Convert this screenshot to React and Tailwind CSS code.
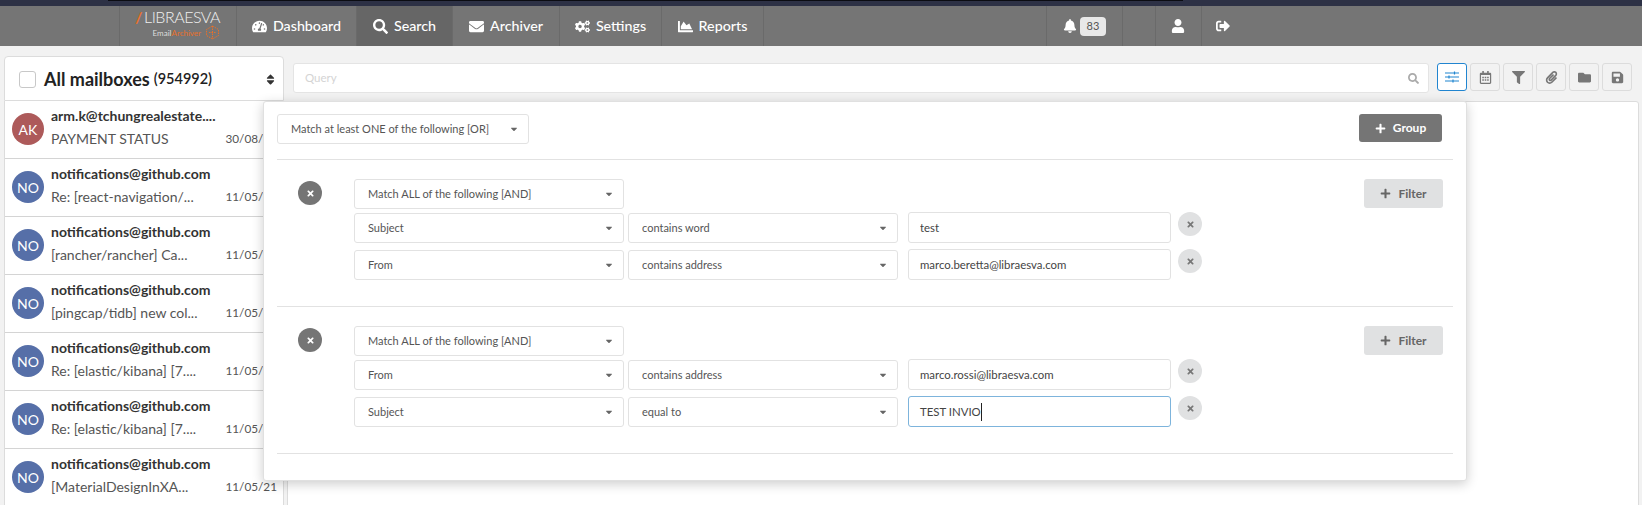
import React from 'react';
import {
  FaTachometerAlt, FaSearch, FaEnvelope, FaCogs, FaChartArea, FaBell, FaUser,
  FaSignOutAlt, FaTimes, FaPlus, FaFilter, FaPaperclip, FaFolder, FaSave, FaSort, FaCaretDown, FaRegCalendarAlt,
} from 'react-icons/fa';

const MESSAGES = [
  { initials: 'AK', from: 'arm.k@tchungrealestate....', subject: 'PAYMENT STATUS', date: '30/08/21', red: true },
  { initials: 'NO', from: 'notifications@github.com', subject: 'Re: [react-navigation/...', date: '11/05/21' },
  { initials: 'NO', from: 'notifications@github.com', subject: '[rancher/rancher] Ca...', date: '11/05/21' },
  { initials: 'NO', from: 'notifications@github.com', subject: '[pingcap/tidb] new col...', date: '11/05/21' },
  { initials: 'NO', from: 'notifications@github.com', subject: 'Re: [elastic/kibana] [7....', date: '11/05/21' },
  { initials: 'NO', from: 'notifications@github.com', subject: 'Re: [elastic/kibana] [7....', date: '11/05/21' },
  { initials: 'NO', from: 'notifications@github.com', subject: '[MaterialDesignInXA...', date: '11/05/21' },
];

const NAV_ITEMS = [
  { label: 'Dashboard', icon: FaTachometerAlt, width: 'w-[120px]' },
  { label: 'Search', icon: FaSearch, width: 'w-[96px]', active: true },
  { label: 'Archiver', icon: FaEnvelope, width: 'w-[107px]' },
  { label: 'Settings', icon: FaCogs, width: 'w-[102px]' },
  { label: 'Reports', icon: FaChartArea, width: 'w-[102px]' },
];

function Select({ label, className }) {
  return (
    <div className={`h-[30px] flex items-center justify-between pl-[13px] pr-[9px] bg-white border border-[#e2e2e2] rounded-[3px] text-[11px] text-[#555] whitespace-nowrap ${className}`}>
      <span>{label}</span>
      <FaCaretDown className="text-[#666] text-[10px]" />
    </div>
  );
}

function RemoveButton() {
  return (
    <button className="w-[24px] h-[24px] rounded-full bg-[#e0e1e2] text-[#777] flex items-center justify-center shrink-0 ml-[7px]">
      <FaTimes className="text-[9px]" />
    </button>
  );
}

function Condition({ field, op, value, focused }) {
  return (
    <div className="flex items-start">
      <Select label={field} className="w-[270px] mt-px" />
      <Select label={op} className="w-[270px] ml-[4px] mt-px" />
      {focused ? (
        <div className="w-[263px] h-[31px] ml-[10px] flex items-center px-[11px] bg-white border border-[#7db4dc] rounded-[3px] text-[11.4px] text-[#444]">
          <span className="border-r border-[#222] leading-[18px]">{value}</span>
        </div>
      ) : (
        <input
          readOnly
          value={value}
          className="w-[263px] h-[31px] ml-[10px] px-[11px] bg-white border border-[#e2e2e2] rounded-[3px] text-[11.4px] text-[#444] outline-none"
        />
      )}
      <RemoveButton />
    </div>
  );
}

function FilterGroup({ rows }) {
  return (
    <div className="flex items-start pl-[21px] pr-[10px] pt-[19px] pb-[26px] border-b border-[#e2e2e2]">
      <button className="w-[24px] h-[24px] rounded-full bg-[#757575] text-white flex items-center justify-center mt-[2px] mr-[32px] shrink-0">
        <FaTimes className="text-[9px]" />
      </button>
      <div className="flex flex-col gap-[6px]">
        <Select label="Match ALL of the following [AND]" className="w-[270px] -mb-[3px]" />
        {rows.map((row) => <Condition key={row.field} {...row} />)}
      </div>
      <button className="ml-auto w-[79px] h-[29px] rounded-[3px] bg-[#e0e1e2] text-[#666] text-[12px] font-bold flex items-center justify-center gap-[7px]">
        <FaPlus className="text-[11px]" /> Filter
      </button>
    </div>
  );
}

function ToolButton({ children, active }) {
  return (
    <button className={`w-[30px] h-[28px] rounded-[3px] flex items-center justify-center text-[13px] text-[#777] ${active ? 'border border-[#2185d0] bg-white' : 'border border-[#dcdcdc] bg-[#f2f2f2]'}`}>
      {children}
    </button>
  );
}

export default function App() {
  return (
    <div className="h-[505px] overflow-hidden bg-[#f2f2f2] font-['Lato','Open_Sans',sans-serif]">
      {/* Window strip above the nav */}
      <div className="h-[6px] bg-[#2d3145]">
        <div className="h-px ml-[108px] w-[1075px] bg-[#0b0c12]" />
      </div>

      {/* Nav */}
      <div className="h-[40px] bg-[#757575] flex text-white text-[14.25px]">
        <div className="w-[119px]" />
        <div className="w-[118px] border-x border-[#6a6a6a] flex flex-col items-end pr-[16px] pt-[3px]">
          <div className="text-[16px] font-light leading-[16px] text-[#f0f0f0] tracking-[-0.5px] whitespace-nowrap">
            <span className="text-[#e8702a] font-bold mr-[2px]">/</span>LIBRAESVA
          </div>
          <div className="flex items-center text-[8px] leading-[14px]">
            <span className="text-[#ddd]">Email</span>
            <span className="text-[#e8702a] mr-[4px]">Archiver</span>
            <svg width="15" height="15" viewBox="0 0 15 15" fill="none" stroke="#e8702a" strokeWidth="1" strokeDasharray="1.5 1">
              <path d="M7.5 1L13.5 4.5V10.5L7.5 14L1.5 10.5V4.5Z" />
              <path d="M7.5 1V14M4 7.5H11" />
            </svg>
          </div>
        </div>
        {NAV_ITEMS.map(({ label, icon: Icon, width, active }) => (
          <div
            key={label}
            className={`${width} border-r border-[#6a6a6a] flex items-center justify-center gap-[6px] font-medium ${active ? 'bg-[#666666]' : ''}`}
          >
            <Icon className="text-[15px]" />
            <span>{label}</span>
          </div>
        ))}
        <div className="w-[282px]" />
        <div className="w-[77px] border-x border-[#6a6a6a] flex items-center justify-center gap-[3px]">
          <FaBell className="text-[14px]" />
          <span className="w-[26px] h-[19px] rounded-[4px] bg-[#e8e8e8] text-[#555] text-[11px] flex items-center justify-center">83</span>
        </div>
        <div className="w-[32px]" />
        <div className="w-[47px] border-x border-[#6a6a6a] flex items-center justify-center pr-[2px]">
          <FaUser className="text-[14px]" />
        </div>
        <div className="w-[40px] flex items-center justify-center pl-[2px]">
          <FaSignOutAlt className="text-[14px]" />
        </div>
      </div>

      {/* Body */}
      <div className="flex pt-[10px] pl-[4px]">
        {/* Message list */}
        <div className="w-[280px] shrink-0">
          <div className="h-[45px] bg-white border border-[#dcdcdc] rounded-t-[4px] flex items-center pl-[14px] pr-[6px] pt-px text-[#222]">
            <span className="w-[17px] h-[17px] rounded-[3px] border border-[#c8c8c8] mr-[8px]" />
            <span className="text-[18px] font-bold">All mailboxes</span>
            <span className="text-[14.5px] font-semibold ml-[4px]">(954992)</span>
            <FaSort className="ml-auto text-[13px] text-[#333]" />
          </div>
          <div className="bg-white border-x border-[#dcdcdc]">
            {MESSAGES.map((m, i) => (
              <div key={i} className="h-[58px] flex border-b border-[#d4d4d4] pl-[7px] pt-[3px]">
                <div className={`w-[32px] h-[32px] mt-[9px] rounded-full flex items-center justify-center text-white text-[14px] shrink-0 ${m.red ? 'bg-[#ad5a5a]' : 'bg-[#566fa8]'}`}>
                  {m.initials}
                </div>
                <div className="ml-[7px] flex-1 min-w-0">
                  <div className="text-[14px] font-bold text-[#333] leading-[24px]">{m.from}</div>
                  <div className="flex justify-between items-center pr-[6px] text-[14px] text-[#555] leading-[21px] whitespace-nowrap">
                    <span>{m.subject}</span>
                    <span className="text-[11.75px]">{m.date}</span>
                  </div>
                </div>
              </div>
            ))}
          </div>
        </div>

        {/* Search area */}
        <div className="relative flex-1 ml-[3px] mr-[3px]">
          <div className="flex items-start ml-[6px] mt-[7px] h-[38px]">
            <div className="w-[1136px] h-[30px] bg-white border border-[#e4e4e4] rounded-[3px] flex items-center justify-between pl-[11px] pr-[9px] text-[11.5px] text-[#d4d4d4]">
              <span>Query</span>
              <FaSearch className="text-[11px] text-[#aaa]" />
            </div>
            <div className="flex gap-[3px] ml-[8px]">
              <ToolButton active>
                <svg width="14" height="12" viewBox="0 0 14 12" fill="none" stroke="#2185d0" strokeWidth="1.2">
                  <path d="M0 2H14M0 6H14M0 10H14" />
                  <path d="M9.5 0.5V3.5M4 4.5V7.5M8 8.5V11.5" />
                </svg>
              </ToolButton>
              <ToolButton><FaRegCalendarAlt /></ToolButton>
              <ToolButton><FaFilter /></ToolButton>
              <ToolButton><FaPaperclip /></ToolButton>
              <ToolButton><FaFolder /></ToolButton>
              <ToolButton><FaSave /></ToolButton>
            </div>
          </div>
          <div className="h-[500px] bg-white border border-[#dcdcdc] rounded-[3px]" />

          {/* Advanced query popover */}
          <div className="absolute left-[-24px] top-[45px] w-[1204px] h-[380px] bg-white rounded-[3px] border border-[#e0e0e0] shadow-[0_3px_12px_rgba(0,0,0,0.2)] px-[13px]">
            <div className="h-[58px] flex items-start justify-between pt-[12px] pr-[11px] border-b border-[#e2e2e2]">
              <Select label="Match at least ONE of the following [OR]" className="w-[252px]" />
              <button className="w-[83px] h-[28px] rounded-[3px] bg-[#757575] text-white text-[12px] font-bold flex items-center justify-center gap-[7px]">
                <FaPlus className="text-[11px]" /> Group
              </button>
            </div>
            <FilterGroup
              rows={[
                { field: 'Subject', op: 'contains word', value: 'test' },
                { field: 'From', op: 'contains address', value: 'marco.beretta@libraesva.com' },
              ]}
            />
            <FilterGroup
              rows={[
                { field: 'From', op: 'contains address', value: 'marco.rossi@libraesva.com' },
                { field: 'Subject', op: 'equal to', value: 'TEST INVIO', focused: true },
              ]}
            />
          </div>
        </div>
      </div>
    </div>
  );
}
